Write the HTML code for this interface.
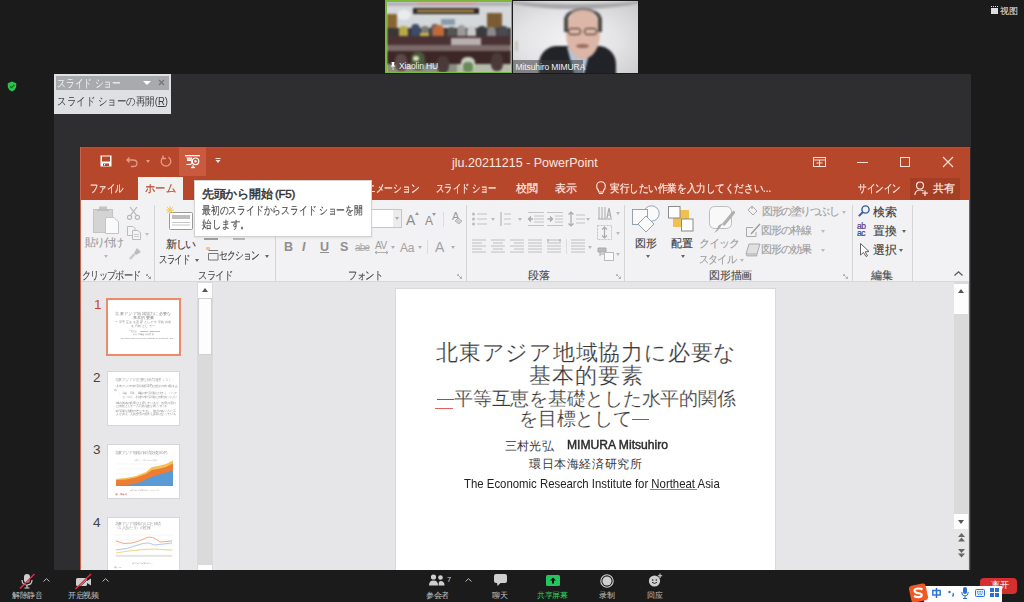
<!DOCTYPE html>
<html lang="ja"><head><meta charset="utf-8">
<style>
*{margin:0;padding:0;box-sizing:border-box}
html,body{width:1024px;height:602px;overflow:hidden;background:#1b1b1b;font-family:"Liberation Sans",sans-serif;position:relative}
.a{position:absolute}
.t{position:absolute;white-space:nowrap;line-height:1;transform-origin:0 50%}
svg{position:absolute;overflow:visible}
#share{left:54px;top:74px;width:917px;height:496px;background:#2e2e30}
#ppt{left:80px;top:147px;width:890px;height:423px;background:#b7472a;overflow:hidden}
#ribbon{left:0;top:53px;width:889px;height:82px;background:#f2f1f3;border-bottom:1px solid #d8d8da}
#left{left:0;top:135px;width:135px;height:288px;background:#e7e7e9}
#main{left:135px;top:135px;width:754px;height:288px;background:#e6e6e8}
#slide{left:316px;top:142px;width:379px;height:300px;background:#fff;box-shadow:0 0 0 1px #d9d9db}
#bar{left:0;top:570px;width:1024px;height:32px;background:#1b1b1b}
.tab{color:#fde9e3;font-size:11px;top:36px;-webkit-text-stroke:0.2px currentColor}
.rl{color:#3c3c3c;font-size:10.5px;letter-spacing:-1px;-webkit-text-stroke:0.12px currentColor}
.gl{color:#4a4a4a;font-size:10.5px;letter-spacing:-1px;top:123px;-webkit-text-stroke:0.12px currentColor}
.dis{color:#9c9c9c}
.sep{position:absolute;width:1px;background:#d5d5d5;top:5px;height:77px}
.dd{position:absolute;width:0;height:0;border-left:2.5px solid transparent;border-right:2.5px solid transparent;border-top:3px solid #666}
</style></head><body>
<!-- shield -->
<svg style="left:7px;top:81px" width="10" height="11" viewBox="0 0 10 11"><path d="M5 0.5 L9.3 2.2 L9.1 6.2 Q8.5 9 5 10.5 Q1.5 9 0.9 6.2 L0.7 2.2 Z" fill="#2bc24a"/><path d="M3 5.3 L4.5 6.8 L7.2 3.8" stroke="#145e22" stroke-width="1.1" fill="none"/></svg>
<!-- view button -->
<div class="a" style="left:991px;top:8px;width:7px;height:6px;background:#ddd"></div>
<div class="a" style="left:991px;top:6px;width:7px;height:1px;border-top:1px dotted #ddd"></div>
<div class="t" style="left:1000px;top:6.5px;font-size:8.5px;color:#e6e6e6;letter-spacing:-0.5px">视图</div>

<!-- video tile 1 -->
<div class="a" style="left:385px;top:0;width:127px;height:73px;background:#7db83c;overflow:hidden">
  <div class="a" style="left:1.5px;top:1.5px;width:124px;height:70px;background:#d4d8db;overflow:hidden">
   <div class="a" style="left:0;top:0;width:124px;height:70px;filter:blur(1px)">
    <div class="a" style="left:0;top:0;width:124px;height:4px;background:#b4b2b6"></div>
    <div class="a" style="left:30px;top:0;width:60px;height:3px;background:#c9a0a0"></div>
    <div class="a" style="left:26px;top:6px;width:66px;height:6px;background:#2e2626"></div>
    <div class="a" style="left:30px;top:8px;width:57px;height:2px;background:#c7a04a"></div>
    <div class="a" style="left:10px;top:8px;width:14px;height:10px;background:#e8ecef;border-radius:50%"></div>
    <div class="a" style="left:0px;top:12px;width:10px;height:20px;background:#87652f"></div>
    <div class="a" style="left:100px;top:11px;width:15px;height:17px;background:#7b5b34"></div>
    <div class="a" style="left:54px;top:17px;width:14px;height:6px;background:#8a9aaa"></div>
    <div class="a" style="left:0;top:26px;width:124px;height:17px;background:#3a3536"></div>
    <div class="a" style="left:12px;top:24px;width:9px;height:11px;background:#b8a84a;border-radius:40% 40% 10% 10%"></div>
    <div class="a" style="left:24px;top:22px;width:9px;height:12px;background:#3d4a6a;border-radius:40% 40% 10% 10%"></div>
    <div class="a" style="left:34px;top:24px;width:8px;height:10px;background:#7a7a72;border-radius:40% 40% 10% 10%"></div>
    <div class="a" style="left:44px;top:22px;width:8px;height:12px;background:#6a5a5a;border-radius:40% 40% 10% 10%"></div>
    <div class="a" style="left:33px;top:31px;width:9px;height:5px;background:#c8b84a"></div>
    <div class="a" style="left:46px;top:23px;width:11px;height:13px;background:#c06a3a;border-radius:40% 40% 10% 10%"></div>
    <div class="a" style="left:60px;top:25px;width:9px;height:12px;background:#555;border-radius:40% 40% 10% 10%"></div>
    <div class="a" style="left:70px;top:23px;width:9px;height:14px;background:#9a9a9a;border-radius:40% 40% 10% 10%"></div>
    <div class="a" style="left:80px;top:24px;width:9px;height:13px;background:#c8c8c8;border-radius:40% 40% 10% 10%"></div>
    <div class="a" style="left:90px;top:24px;width:10px;height:13px;background:#3a3a3e;border-radius:40% 40% 10% 10%"></div>
    <div class="a" style="left:100px;top:25px;width:9px;height:12px;background:#8a8a8a;border-radius:40% 40% 10% 10%"></div>
    <div class="a" style="left:110px;top:24px;width:12px;height:14px;background:#4a4a52;border-radius:40% 40% 10% 10%"></div>
    <div class="a" style="left:0;top:34px;width:124px;height:9px;background:#4a3234"></div>
    <div class="a" style="left:64px;top:36px;width:30px;height:7px;background:#b8b0b0"></div>
    <div class="a" style="left:0;top:43px;width:124px;height:6px;background:#7c6a6a"></div>
    <div class="a" style="left:0;top:49px;width:124px;height:14px;background:#3c2726"></div>
    <div class="a" style="left:0;top:62px;width:124px;height:9px;background:#8a8e7e"></div>
    <div class="a" style="left:70px;top:62px;width:54px;height:9px;background:#b6bcac"></div>
    <div class="a" style="left:8px;top:52px;width:12px;height:17px;background:#5a4a48;border-radius:40%"></div>
    <div class="a" style="left:24px;top:50px;width:14px;height:18px;background:#4a5a3a;border-radius:40%"></div>
    <div class="a" style="left:26px;top:54px;width:6px;height:5px;background:#d8e0c8;border-radius:40%"></div>
    <div class="a" style="left:50px;top:54px;width:12px;height:17px;background:#4a3a3a;border-radius:40%"></div>
    <div class="a" style="left:74px;top:55px;width:14px;height:14px;background:#c8d2c0;border-radius:40%"></div>
    <div class="a" style="left:76px;top:60px;width:10px;height:10px;background:#6a8a5a;border-radius:40%"></div>
    <div class="a" style="left:104px;top:51px;width:12px;height:18px;background:#4a3a3a;border-radius:40%"></div>
   </div>
  </div>
  <svg style="left:5px;top:62px" width="6" height="8" viewBox="0 0 6 8"><path d="M1.5 0 H4.5 L4 3 L5.5 4.5 H0.5 L2 3 Z M2.7 4.5 V8 H3.3 V4.5Z" fill="#fff"/></svg>
  <div class="t" style="left:14px;top:62px;font-size:8.5px;color:#f2f2f2;letter-spacing:-0.1px">Xiaolin HU</div>
</div>
<!-- video tile 2 -->
<div class="a" style="left:513px;top:1px;width:125px;height:72px;background:radial-gradient(ellipse at 45% 55%,#f2f2f4 0%,#e4e4e6 50%,#c8c8ca 100%);overflow:hidden">
 <div class="a" style="left:0;top:0;width:125px;height:72px;filter:blur(0.8px)">
  <div class="a" style="left:-10px;top:-14px;width:145px;height:22px;border-bottom:5px solid #a8a8aa;border-radius:0 0 50% 50%"></div>
  <div class="a" style="left:2px;top:40px;width:3px;height:10px;background:#c9c4b8"></div>
  <div class="a" style="left:26px;top:45px;width:77px;height:34px;background:#222328;border-radius:18px 18px 0 0"></div>
  <div class="a" style="left:54px;top:46px;width:24px;height:27px;background:#b4c4d8;clip-path:polygon(0 0,100% 0,70% 100%,30% 100%)"></div>
  <div class="a" style="left:53px;top:8px;width:34px;height:50px;background:#dcb6a6;border-radius:46% 46% 50% 50%"></div>
  <div class="a" style="left:51px;top:7px;width:38px;height:24px;border-top:2px solid #7a7472;border-left:4px solid #4e4a48;border-right:4px solid #4e4a48;border-radius:50% 50% 0 0"></div>
  <div class="a" style="left:55px;top:27px;width:13px;height:7px;border:1.2px solid #3a2a28;border-radius:3px"></div>
  <div class="a" style="left:71px;top:27px;width:13px;height:7px;border:1.2px solid #3a2a28;border-radius:3px"></div>
  <div class="a" style="left:63px;top:43px;width:13px;height:4px;background:#9a6a5e;border-radius:50%"></div>
 </div>
  <div class="a" style="left:0;top:59px;width:70px;height:13px;background:rgba(60,60,62,0.55)"></div>
  <div class="t" style="left:2.5px;top:62px;font-size:8.5px;color:#f2f2f2;letter-spacing:-0.1px">Mitsuhiro MIMURA</div>
</div>

<div id="share" class="a"></div>
<div class="a" style="left:80px;top:146px;width:890px;height:1px;background:#3c2422"></div>
<!-- floating slideshow toolbar -->
<div class="a" style="left:54px;top:74px;width:117px;height:40px;background:#dfe0e3">
  <div class="a" style="left:2px;top:2px;width:113px;height:14px;background:#a8aaad"></div>
  <div class="t" style="left:3px;top:4px;font-size:10.5px;color:#f4f4f4;transform:scaleX(0.8)">スライド ショー</div>
  <div class="dd" style="left:89px;top:7px;border-left-width:4px;border-right-width:4px;border-top:4px solid #fff"></div>
  <svg style="left:104px;top:5px" width="7" height="7" viewBox="0 0 7 7"><path d="M1 1 L6 6 M6 1 L1 6" stroke="#76767a" stroke-width="1.3"/></svg>
  <div class="t" style="left:3px;top:22px;font-size:11px;color:#3d3d3d;transform:scaleX(0.865)">スライド ショーの再開(<u>R</u>)</div>
</div>

<div id="ppt" class="a">
  <div class="a" style="left:0;top:0;width:890px;height:1px;background:#a9574a"></div>
  <!-- title bar -->
  <svg style="left:20px;top:8px" width="12" height="12" viewBox="0 0 12 12"><rect x="0.5" y="0.5" width="11" height="11" fill="#fff"/><rect x="2" y="1.5" width="8" height="5" fill="#b7472a"/><rect x="3" y="8.5" width="6" height="2.5" fill="#b7472a"/><rect x="4" y="9" width="1" height="1.5" fill="#fff"/></svg>
  <svg style="left:46px;top:9px" width="12" height="11" viewBox="0 0 12 11"><path d="M1 4 H7 Q11 4 11 7.5 Q11 10.5 7 10.5 H5 M3.5 1.5 L1 4 L3.5 6.5" stroke="#e39b86" stroke-width="1.3" fill="none"/></svg>
  <div class="dd" style="left:66px;top:13px;border-top-color:#e39b86"></div>
  <svg style="left:80px;top:8px" width="12" height="12" viewBox="0 0 12 12"><path d="M8.5 2.2 A4.8 4.8 0 1 1 3.5 2.2" stroke="#e39b86" stroke-width="1.3" fill="none"/><path d="M3 0.5 V3.5 H6" stroke="#e39b86" stroke-width="1.3" fill="none"/></svg>
  <div class="a" style="left:99px;top:0;width:27px;height:29px;background:#ca5a3d"></div>
  <svg style="left:105px;top:8px" width="15" height="14" viewBox="0 0 15 14"><rect x="0" y="0" width="15" height="1.3" fill="#fff"/><path d="M1.5 3 H6.5 V4.2 H2.7 V5.5 H5.5 Q7 5.5 7 7.3 Q7 9.5 4.5 9.5 H1.5" stroke="#fff" stroke-width="1.1" fill="none"/><circle cx="10.5" cy="6.3" r="3.3" stroke="#fff" stroke-width="1.2" fill="none"/><circle cx="10.5" cy="6.3" r="1.2" fill="#fff"/><path d="M6 12.5 H10" stroke="#fff" stroke-width="1.3"/><path d="M8 10 V12.5" stroke="#fff" stroke-width="1"/></svg>
  <svg style="left:135px;top:11px" width="6" height="6" viewBox="0 0 6 6"><rect x="0.5" y="0" width="5" height="1" fill="#fbe3dc"/><path d="M0.5 2 H5.5 L3 5 Z" fill="#fbe3dc"/></svg>
  <div class="t" style="left:372px;top:10px;font-size:12.5px;color:#fbe8e2">jlu.20211215 - PowerPoint</div>
  <svg style="left:733px;top:10px" width="13" height="10" viewBox="0 0 13 10"><rect x="0.5" y="0.5" width="12" height="9" stroke="#fbe3dc" fill="none"/><path d="M0.5 3 H12.5 M6.5 3 V9.5 M3.5 6 H9.5" stroke="#fbe3dc" fill="none"/></svg>
  <div class="a" style="left:777px;top:15px;width:11px;height:1px;background:#fbe3dc"></div>
  <div class="a" style="left:820px;top:10px;width:10px;height:10px;border:1px solid #fbe3dc"></div>
  <svg style="left:863px;top:10px" width="10" height="10" viewBox="0 0 10 10"><path d="M0 0 L10 10 M10 0 L0 10" stroke="#fbe3dc" stroke-width="1.1"/></svg>
  <!-- tabs -->
  <div class="t tab" style="left:10px;transform:scaleX(0.77)">ファイル</div>
  <div class="a" style="left:58px;top:30px;width:45px;height:24px;background:#f1f1f1"></div>
  <div class="t tab" style="left:65px;color:#b7472a;transform:scaleX(0.94)">ホーム</div>
  <div class="t tab" style="left:278px;transform:scaleX(0.8)">アニメーション</div>
  <div class="t tab" style="left:356px;transform:scaleX(0.76)">スライド ショー</div>
  <div class="t tab" style="left:436px">校閲</div>
  <div class="t tab" style="left:475px">表示</div>
  <svg style="left:516px;top:34px" width="10" height="14" viewBox="0 0 10 14"><path d="M2.5 9.5 Q0.5 7.5 0.7 5 A4.3 4.3 0 0 1 9.3 5 Q9.5 7.5 7.5 9.5 V11 H2.5 Z" stroke="#fbe3dc" stroke-width="1.1" fill="none"/><path d="M3 12.5 H7" stroke="#fbe3dc" stroke-width="1.1"/></svg>
  <div class="t tab" style="left:530px;transform:scaleX(0.87)">実行したい作業を入力してください...</div>
  <div class="t tab" style="left:778px;transform:scaleX(0.78)">サインイン</div>
  <div class="a" style="left:830px;top:31px;width:50px;height:22px;background:#a43f26"></div>
  <svg style="left:834px;top:34px" width="15" height="15" viewBox="0 0 15 15"><circle cx="6" cy="4.5" r="3.5" stroke="#fbe3dc" stroke-width="1.2" fill="none"/><path d="M0.8 14 Q1.5 9 6 9 Q8 9 9.5 10" stroke="#fbe3dc" stroke-width="1.2" fill="none"/><path d="M11 9.5 V15 M8.3 12.2 H13.8" stroke="#fbe3dc" stroke-width="1.2"/></svg>
  <div class="t tab" style="left:853px;letter-spacing:-0.5px">共有</div>

  <div id="ribbon" class="a">
  <!-- clipboard -->
  <svg style="left:13px;top:6px" width="26" height="28" viewBox="0 0 26 28"><rect x="0.5" y="3.5" width="19" height="23" fill="#d4d4d4" stroke="#c4c4c4"/><rect x="6" y="0.5" width="8" height="4" fill="#c4c4c4"/><rect x="4" y="3" width="12" height="2" fill="#bdbdbd"/><path d="M12.5 11.5 H21 L25.5 16 V27.5 H12.5 Z" fill="#fafafa" stroke="#c4c4c4"/></svg>
  <div class="t rl dis" style="left:5px;top:37px;font-size:11px;letter-spacing:-1.6px">貼り付け</div>
  <div class="dd" style="left:24px;top:55px;border-top-color:#b8b8b8"></div>
  <svg style="left:47px;top:7px" width="13" height="13" viewBox="0 0 13 13"><path d="M3 0 L10 9 M10 0 L3 9" stroke="#b5b5b5" stroke-width="1.2"/><circle cx="2.6" cy="10.3" r="2.1" stroke="#b5b5b5" stroke-width="1.1" fill="none"/><circle cx="10.4" cy="10.3" r="2.1" stroke="#b5b5b5" stroke-width="1.1" fill="none"/></svg>
  <svg style="left:47px;top:26px" width="14" height="14" viewBox="0 0 14 14"><path d="M0.5 0.5 H6 L8 2.5 V9.5 H0.5 Z" fill="#f4f4f4" stroke="#bbb"/><path d="M5.5 4.5 H11 L13.5 7 V13.5 H5.5 Z" fill="#f4f4f4" stroke="#bbb"/><path d="M7 8.5 H12 M7 10.5 H12" stroke="#ccc"/></svg>
  <div class="dd" style="left:65px;top:33px;border-top-color:#c0c0c0"></div>
  <svg style="left:49px;top:47px" width="13" height="13" viewBox="0 0 13 13"><path d="M8 1 L12 5 L7 8 L5 6 Z" fill="#bdbdbd"/><path d="M5.5 7 L1 12" stroke="#c8c8c8" stroke-width="2.5"/></svg>
  <div class="t gl" style="left:2px;top:70px;font-size:11px;transform:scaleX(0.83)">クリップボード</div>
  <svg style="left:66px;top:74px" width="5" height="5" viewBox="0 0 5 5"><path d="M0.5 0.5 H2 M0.5 0.5 V2 M1 1 L4.5 4.5 M2.5 4.5 H4.5 V2.5" stroke="#888" stroke-width="0.8" fill="none"/></svg>
  <div class="sep" style="left:74px"></div>
  <!-- slides -->
  <svg style="left:86px;top:5px" width="28" height="26" viewBox="0 0 28 26"><rect x="3.5" y="7.5" width="23" height="17" rx="1" fill="#fdfdfd" stroke="#9a9a9a"/><rect x="6" y="10" width="18" height="4" fill="#bdbdbd"/><path d="M6 17.5 H24 M6 20 H24" stroke="#c8c8c8"/><path d="M4 1 V9 M0 5 H8 M1.2 2.2 L6.8 7.8 M6.8 2.2 L1.2 7.8" stroke="#f2c74a" stroke-width="1"/></svg>
  <div class="t rl" style="left:86px;top:39px;font-size:11px;letter-spacing:-1.4px">新しい</div>
  <div class="a" style="left:124px;top:38px;width:14px;height:1.5px;background:#a0a0a0"></div>
  <div class="a" style="left:153px;top:38px;width:12px;height:1.5px;background:#b8b8b8"></div>
  <div class="t rl" style="left:79px;top:54px;font-size:11px;transform:scaleX(0.77)">スライド</div>
  <div class="dd" style="left:115px;top:59px"></div>
  <svg style="left:126px;top:47px" width="13" height="14" viewBox="0 0 13 14"><rect x="0" y="0" width="4" height="3" fill="#f4c48a"/><path d="M2.5 3.5 H12 M2.5 6.5 H12 V13 H2.5 Z" stroke="#777" fill="none"/></svg>
  <div class="t rl" style="left:139px;top:50px;font-size:11px;transform:scaleX(0.8)">セクション</div>
  <div class="dd" style="left:185px;top:55px"></div>
  <div class="t gl" style="left:118px;top:70px;font-size:11px;transform:scaleX(0.85)">スライド</div>
  <div class="sep" style="left:195px"></div>
  <!-- font -->
  <div class="a" style="left:280px;top:9px;width:42px;height:19px;background:#fff;border:1px solid #c6c6c6"></div>
  <div class="a" style="left:313px;top:10px;width:8px;height:17px;background:#ececec"></div>
  <div class="dd" style="left:315px;top:17px;border-top-color:#aaa"></div>
  <div class="t" style="left:326px;top:13px;font-size:14px;color:#8c8c8c">A</div>
  <svg style="left:335px;top:12px" width="4" height="3" viewBox="0 0 4 3"><path d="M0 3 L2 0 L4 3Z" fill="#999"/></svg>
  <div class="t" style="left:345px;top:15px;font-size:12px;color:#8c8c8c">A</div>
  <svg style="left:352px;top:13px" width="4" height="3" viewBox="0 0 4 3"><path d="M0 0 L2 3 L4 0Z" fill="#999"/></svg>
  <div class="a" style="left:363px;top:12px;width:1px;height:15px;background:#dcdcdc"></div>
  <div class="t" style="left:372px;top:11px;font-size:11px;color:#9a9a9a">A</div>
  <svg style="left:374px;top:17px" width="9" height="8" viewBox="0 0 9 8"><path d="M4 1 L8 4 L5 7 L1 4 Z" fill="#d0d0d0" stroke="#aaa" stroke-width="0.8"/></svg>
  <div class="t" style="left:204px;top:41px;font-size:12.5px;font-weight:bold;color:#8f8f8f">B</div>
  <div class="t" style="left:222px;top:41px;font-size:12.5px;font-style:italic;color:#8f8f8f;font-weight:bold">I</div>
  <div class="t" style="left:240px;top:41px;font-size:12.5px;color:#8f8f8f;text-decoration:underline;font-weight:bold">U</div>
  <div class="t" style="left:260px;top:41px;font-size:12.5px;color:#8f8f8f;font-weight:bold">S</div>
  <div class="t" style="left:275px;top:43px;font-size:10px;color:#a8a8a8;text-decoration:line-through;letter-spacing:-0.8px">abe</div>
  <div class="t" style="left:295px;top:41px;font-size:10px;color:#9e9e9e;letter-spacing:-0.5px">AV</div>
  <svg style="left:295px;top:51px" width="13" height="3" viewBox="0 0 13 3"><path d="M0 1.5 H13 M0 1.5 L2 0 M0 1.5 L2 3 M13 1.5 L11 0 M13 1.5 L11 3" stroke="#9e9e9e" stroke-width="0.8"/></svg>
  <div class="dd" style="left:311px;top:46px;border-top-color:#b0b0b0"></div>
  <div class="t" style="left:320px;top:42px;font-size:12px;color:#a2a2a2;letter-spacing:-0.3px">Aa</div>
  <div class="dd" style="left:338px;top:46px;border-top-color:#b0b0b0"></div>
  <div class="a" style="left:347px;top:40px;width:1px;height:14px;background:#dcdcdc"></div>
  <div class="t" style="left:355px;top:40px;font-size:14px;color:#a2a2a2">A</div>
  <div class="dd" style="left:371px;top:46px;border-top-color:#b0b0b0"></div>
  <div class="t gl" style="left:268px;top:70px;font-size:11px;transform:scaleX(0.86)">フォント</div>
  <svg style="left:377px;top:74px" width="5" height="5" viewBox="0 0 5 5"><path d="M0.5 0.5 H2 M0.5 0.5 V2 M1 1 L4.5 4.5 M2.5 4.5 H4.5 V2.5" stroke="#aaa" stroke-width="0.8" fill="none"/></svg>
  <div class="sep" style="left:386px"></div>
  <!-- paragraph -->
  <svg style="left:392px;top:12px" width="16" height="14" viewBox="0 0 16 14"><circle cx="1.5" cy="2" r="1.5" fill="#bbb"/><circle cx="1.5" cy="7" r="1.5" fill="#bbb"/><circle cx="1.5" cy="12" r="1.5" fill="#bbb"/><path d="M5 2 H15 M5 7 H15 M5 12 H15" stroke="#c4c4c4"/></svg>
  <div class="dd" style="left:411px;top:18px;border-top-color:#bbb"></div>
  <svg style="left:420px;top:12px" width="11" height="14" viewBox="0 0 11 14"><path d="M1 0 V14" stroke="#bbb" stroke-width="1.3"/><path d="M4 2 H11 M4 7 H11 M4 12 H11" stroke="#c4c4c4"/></svg>
  <div class="dd" style="left:438px;top:18px;border-top-color:#bbb"></div>
  <svg style="left:448px;top:12px" width="16" height="14" viewBox="0 0 16 14"><path d="M0 0.5 H16 M6 4 H16 M6 7 H16 M6 10 H16 M0 13.5 H16" stroke="#c4c4c4"/><path d="M5 7 H1 M3 4.5 L0.5 7 L3 9.5" stroke="#aaa" stroke-width="1.3" fill="none"/></svg>
  <svg style="left:467px;top:12px" width="16" height="14" viewBox="0 0 16 14"><path d="M0 0.5 H16 M8 4 H16 M8 7 H16 M8 10 H16 M0 13.5 H16" stroke="#c4c4c4"/><path d="M0.5 7 H5 M3 4.5 L5.5 7 L3 9.5" stroke="#aaa" stroke-width="1.3" fill="none"/></svg>
  <svg style="left:488px;top:11px" width="17" height="16" viewBox="0 0 17 16"><path d="M3 1 V15 M0.5 3.5 L3 1 L5.5 3.5 M0.5 12.5 L3 15 L5.5 12.5" stroke="#aaa" stroke-width="1.2" fill="none"/><path d="M8 4 H17 M8 8 H17 M8 12 H17" stroke="#c4c4c4"/></svg>
  <div class="dd" style="left:506px;top:18px;border-top-color:#bbb"></div>
  <svg style="left:518px;top:5px" width="14" height="15" viewBox="0 0 14 15"><path d="M1 2 V14 M4 2 V14 M7 2 V14" stroke="#aaa" stroke-width="1"/><path d="M9 13 L11 3 L13 13 M9.7 10 H12.3" stroke="#aaa" stroke-width="1.2" fill="none"/><path d="M0 14 H14" stroke="#aaa"/></svg>
  <div class="dd" style="left:536px;top:12px;border-top-color:#bbb"></div>
  <svg style="left:517px;top:25px" width="15" height="15" viewBox="0 0 15 15"><rect x="0.5" y="0.5" width="14" height="14" fill="none" stroke="#c4c4c4" stroke-dasharray="2 1"/><path d="M7.5 2 V13 M5 4.5 L7.5 2 L10 4.5 M5 10.5 L7.5 13 L10 10.5" stroke="#aaa" stroke-width="1.2" fill="none"/></svg>
  <div class="dd" style="left:536px;top:32px;border-top-color:#bbb"></div>
  <svg style="left:518px;top:47px" width="16" height="14" viewBox="0 0 16 14"><path d="M0 1 H8 V5 H0 Z M2 5 V9 M2 7 H6" fill="#bbb" stroke="#aaa"/><rect x="6.5" y="5.5" width="9" height="8" fill="#fafafa" stroke="#bbb"/></svg>
  <div class="dd" style="left:536px;top:53px;border-top-color:#bbb"></div>
  <svg style="left:392px;top:39px" width="90" height="14" viewBox="0 0 90 14">
    <path d="M0 1 H14 M0 4 H10 M0 7 H14 M0 10 H10 M0 13 H14" stroke="#c0c0c0"/>
    <path d="M19 1 H33 M21 4 H31 M19 7 H33 M21 10 H31 M19 13 H33" stroke="#c0c0c0"/>
    <path d="M38 1 H52 M42 4 H52 M38 7 H52 M42 10 H52 M38 13 H52" stroke="#c0c0c0"/>
    <path d="M56 1 H70 M56 4 H70 M56 7 H70 M56 10 H70 M56 13 H70" stroke="#c0c0c0"/>
    <path d="M75 1 H89 M75 4 H89 M75 7 H89 M75 10 H89 M75 13 H89" stroke="#c0c0c0"/><path d="M76 0 V3 M88 0 V3" stroke="#aaa"/>
  </svg>
  <div class="a" style="left:486px;top:39px;width:1px;height:15px;background:#dcdcdc"></div>
  <svg style="left:491px;top:39px" width="14" height="14" viewBox="0 0 14 14"><path d="M0 1 H14 M0 4 H14 M0 7 H14 M0 10 H14 M0 13 H14" stroke="#c0c0c0"/></svg>
  <div class="dd" style="left:508px;top:46px;border-top-color:#bbb"></div>
  <div class="t gl" style="left:448px;top:70px;font-size:11px;letter-spacing:-0.3px">段落</div>
  <svg style="left:536px;top:74px" width="5" height="5" viewBox="0 0 5 5"><path d="M0.5 0.5 H2 M0.5 0.5 V2 M1 1 L4.5 4.5 M2.5 4.5 H4.5 V2.5" stroke="#aaa" stroke-width="0.8" fill="none"/></svg>
  <div class="sep" style="left:544px"></div>
  <!-- drawing -->
  <svg style="left:552px;top:5px" width="29" height="28" viewBox="0 0 29 28"><circle cx="19.5" cy="8.5" r="7.7" fill="#fafafa" stroke="#8a9aaa" stroke-width="0.9"/><rect x="0.5" y="4.5" width="15" height="15" fill="#fafafa" stroke="#8a9aaa" stroke-width="0.9"/><path d="M14 11 L22 19 L14 27 L6 19 Z" fill="#fafafa" stroke="#8a9aaa" stroke-width="0.9"/></svg>
  <div class="t rl" style="left:555px;top:38px;font-size:11px;letter-spacing:-0.5px">図形</div>
  <div class="dd" style="left:566px;top:55px"></div>
  <svg style="left:588px;top:6px" width="26" height="26" viewBox="0 0 26 26"><rect x="12" y="4" width="9" height="9" fill="#f0c050"/><rect x="5" y="12" width="9" height="9" fill="#f0c050"/><rect x="0.5" y="0.5" width="11.5" height="11.5" fill="#fdfdfd" stroke="#8a8a8a"/><rect x="13.5" y="13" width="11.5" height="12" fill="#fdfdfd" stroke="#8a8a8a"/></svg>
  <div class="t rl" style="left:591px;top:38px;font-size:11px;letter-spacing:-0.5px">配置</div>
  <div class="dd" style="left:601px;top:55px"></div>
  <svg style="left:629px;top:6px" width="26" height="28" viewBox="0 0 26 28"><rect x="0.5" y="0.5" width="22" height="22" rx="5" fill="#f8f8f8" stroke="#bdbdbd"/><path d="M24.5 6.5 L15 18" stroke="#b0b0b0" stroke-width="3.2" stroke-linecap="round"/><path d="M14 17 L11.5 21 Q9 25 5 27 Q8 24 9.5 19.5 Z" fill="#a8a8a8"/></svg>
  <div class="t rl dis" style="left:619px;top:38px;font-size:11px">クイック</div>
  <div class="t rl dis" style="left:619px;top:54px;font-size:11px;transform:scaleX(0.92)">スタイル</div>
  <div class="dd" style="left:660px;top:59px;border-top-color:#bbb"></div>
  <svg style="left:667px;top:5px" width="14" height="13" viewBox="0 0 14 13"><path d="M5 1 L10 6 L6 10 L1 5 Z" fill="none" stroke="#aaa"/><path d="M5 1 V4" stroke="#aaa"/></svg>
  <div class="t rl dis" style="left:682px;top:6px;font-size:11px;letter-spacing:-1.5px">図形の塗りつぶし</div>
  <div class="dd" style="left:762px;top:11px;border-top-color:#bbb"></div>
  <svg style="left:666px;top:24px" width="15" height="13" viewBox="0 0 15 13"><path d="M0.5 3.5 H7 M0.5 3.5 V12.5 H10 V8" stroke="#aaa" fill="none"/><path d="M14 0 L5 10" stroke="#999" stroke-width="1.3"/></svg>
  <div class="t rl dis" style="left:681px;top:25px;font-size:11px">図形の枠線</div>
  <div class="dd" style="left:741px;top:30px;border-top-color:#bbb"></div>
  <svg style="left:665px;top:43px" width="16" height="14" viewBox="0 0 16 14"><path d="M4 1 H15 L12 11 H1 Z" fill="#e0e0e0" stroke="#aaa"/><path d="M1 11 L2 13 H12 L12 11" fill="#c8c8c8" stroke="#aaa" stroke-width="0.8"/></svg>
  <div class="t rl dis" style="left:681px;top:44px;font-size:11px">図形の効果</div>
  <div class="dd" style="left:741px;top:49px;border-top-color:#bbb"></div>
  <div class="t gl" style="left:629px;top:70px;font-size:11px;letter-spacing:-0.2px">図形描画</div>
  <svg style="left:763px;top:74px" width="5" height="5" viewBox="0 0 5 5"><path d="M0.5 0.5 H2 M0.5 0.5 V2 M1 1 L4.5 4.5 M2.5 4.5 H4.5 V2.5" stroke="#aaa" stroke-width="0.8" fill="none"/></svg>
  <div class="sep" style="left:772px"></div>
  <!-- editing -->
  <svg style="left:778px;top:5px" width="12" height="12" viewBox="0 0 12 12"><circle cx="7.5" cy="4.5" r="3.6" stroke="#2f5e9e" stroke-width="1.4" fill="none"/><path d="M5 7 L0.8 11.2" stroke="#2f5e9e" stroke-width="1.8"/></svg>
  <div class="t rl" style="left:793px;top:7px;font-size:11.8px;letter-spacing:-0.3px">検索</div>
  <div class="t" style="left:777px;top:23px;font-size:8.5px;color:#5a3a8a;letter-spacing:-0.4px;line-height:7px;-webkit-text-stroke:0.2px currentColor">ab<br><span style="color:#2a4a8a">ac</span></div>
  <div class="t rl" style="left:793px;top:26px;font-size:11.8px;letter-spacing:-0.3px">置換</div>
  <div class="dd" style="left:822px;top:30px"></div>
  <svg style="left:780px;top:43px" width="10" height="14" viewBox="0 0 10 14"><path d="M0.5 0.5 V12 L3.5 9.5 L6 13.5 L7.5 12.8 L5.2 8.8 L9 8.5 Z" fill="#fff" stroke="#555" stroke-width="0.9"/></svg>
  <div class="t rl" style="left:793px;top:45px;font-size:11.8px;letter-spacing:-0.3px">選択</div>
  <div class="dd" style="left:819px;top:49px"></div>
  <div class="t gl" style="left:791px;top:70px;font-size:11px;letter-spacing:-0.3px">編集</div>
  <div class="sep" style="left:832px"></div>
  <svg style="left:874px;top:71px" width="9" height="5" viewBox="0 0 9 5"><path d="M0.5 4.5 L4.5 0.8 L8.5 4.5" stroke="#555" stroke-width="1.2" fill="none"/></svg>
</div>
  <div id="left" class="a">
  <div class="t" style="left:14px;top:16px;font-size:13.5px;color:#c8472a">1</div>
  <div class="a" style="left:26px;top:16px;width:75px;height:58px;border:2px solid #ec8a6a;background:#fff;overflow:hidden">
    <div class="a" style="left:0;top:0;width:379px;height:288px;transform:scale(0.1865);transform-origin:0 0;color:#8a8a8a">
      <div class="t" style="left:40px;top:62px;font-size:22px;letter-spacing:0.8px">北東アジア地域協力に必要な</div>
      <div class="t" style="left:133px;top:86px;font-size:22px;letter-spacing:1px">基本的要素</div>
      <div class="t" style="left:40px;top:110px;font-size:18.5px;letter-spacing:-0.2px">ー平等互恵を基礎とした水平的関係</div>
      <div class="t" style="left:124px;top:130px;font-size:18.5px">を目標としてー</div>
      <div class="t" style="left:110px;top:160px;font-size:12px">三村光弘　 <b>MIMURA Mitsuhiro</b></div>
      <div class="t" style="left:133px;top:178px;font-size:12px;letter-spacing:0.6px">環日本海経済研究所</div>
      <div class="t" style="left:68px;top:197px;font-size:12.5px">The Economic Research Institute for Northeat Asia</div>
    </div>
  </div>
  <div class="t" style="left:13px;top:89px;font-size:13.5px;color:#444">2</div>
  <div class="a" style="left:28px;top:90px;width:71px;height:53px;background:#fff;box-shadow:0 0 0 1px #d6d6d8;overflow:hidden">
    <div class="a" style="left:0;top:0;width:379px;height:288px;transform:scale(0.1873);transform-origin:0 0;color:#888">
      <div class="t" style="left:36px;top:30px;font-size:19px;color:#aaa">北東アジアの主要な経済指標（１）</div>
      <div class="t" style="left:30px;top:68px;font-size:15px;color:#8a8a8a">・北東アジアの経済規模(GDP)は世界の約２割を占</div>
      <div class="t" style="left:30px;top:88px;font-size:15px;color:#8a8a8a">め</div>
      <div class="t" style="left:56px;top:108px;font-size:14px;color:#999">－ 中国、日本、韓国の経済規模は大きく、ロシア</div>
      <div class="t" style="left:56px;top:126px;font-size:14px;color:#999">　 モンゴル、北朝鮮の経済規模は相対的に小さい</div>
      <div class="t" style="left:30px;top:156px;font-size:15px;color:#8a8a8a">・域内貿易の比率は上昇しているが、投資の流れ</div>
      <div class="t" style="left:30px;top:176px;font-size:15px;color:#8a8a8a">　は依然として一方向的な面が残っている</div>
      <div class="t" style="left:30px;top:198px;font-size:15px;color:#8a8a8a">・経済発展段階の差が大きく、協力のあり方に工</div>
      <div class="t" style="left:30px;top:218px;font-size:15px;color:#8a8a8a">　夫が必要、人的交流の拡大も課題となっている</div>
    </div>
  </div>
  <div class="t" style="left:13px;top:161px;font-size:13.5px;color:#444">3</div>
  <div class="a" style="left:28px;top:163px;width:71px;height:53px;background:#fff;box-shadow:0 0 0 1px #d6d6d8;overflow:hidden">
    <div class="a" style="left:0;top:0;width:379px;height:288px;transform:scale(0.1873);transform-origin:0 0"><div class="t" style="left:36px;top:30px;font-size:19px;color:#999">北東アジア地域の経済規模(GDP)</div><div class="t" style="left:140px;top:76px;font-size:9px;color:#bbb">北東アジア各国のGDPの推移</div><div class="t" style="left:120px;top:238px;font-size:9px;color:#bbb">■中国 ■日本 ■韓国 ■ロシア ■モンゴル</div><div class="t" style="left:36px;top:258px;font-size:9px;color:#c44">出所：世界銀行</div></div>
    <svg style="left:8px;top:15px" width="57" height="28" viewBox="0 0 57 28"><path d="M0 4 H57 M0 9 H57 M0 14 H57 M0 19 H57" stroke="#eee" stroke-width="0.6"/><path d="M0 19 L10 18 L20 16 L30 12 L36 7 L42 6 L50 4 L57 0.5 V26 H0 Z" fill="#f5c056"/><path d="M0 20 L10 19.5 L20 17.5 L30 14 L36 10 L42 9 L50 7 L57 3.5 V26 H0 Z" fill="#ec7d32"/><path d="M0 26 L15 24.5 L25 22 L35 17 L45 14 L57 10.5 V26 H0 Z" fill="#5b9bd5"/></svg>
    
  </div>
  <div class="t" style="left:13px;top:234px;font-size:13.5px;color:#444">4</div>
  <div class="a" style="left:28px;top:236px;width:71px;height:53px;background:#fff;box-shadow:0 0 0 1px #d6d6d8;overflow:hidden">
    <div class="a" style="left:0;top:0;width:379px;height:288px;transform:scale(0.1873);transform-origin:0 0"><div class="t" style="left:36px;top:20px;font-size:19px;color:#999">北東アジア地域の人口と経済</div><div class="t" style="left:36px;top:44px;font-size:19px;color:#999">（１人当たり）の推移</div><div class="t" style="left:130px;top:240px;font-size:9px;color:#bbb">■中国 ■日本 ■韓国 ■ロシア</div><div class="t" style="left:30px;top:262px;font-size:9px;color:#999">出所：IMF</div></div>
    <svg style="left:6px;top:14px" width="60" height="26" viewBox="0 0 60 26"><path d="M0 3 H60 M0 8 H60 M0 13 H60 M0 18 H60 M0 23 H60" stroke="#eee" stroke-width="0.6"/><path d="M2 9 Q10 13 18 11 T32 6 T46 10 L58 9" stroke="#f0a070" stroke-width="0.9" fill="none"/><path d="M2 18 Q14 17 24 13 T40 13 L58 11" stroke="#a8c4e4" stroke-width="0.9" fill="none"/><path d="M2 21 Q14 19 24 18 T40 17 L58 18" stroke="#f2d070" stroke-width="0.9" fill="none"/><path d="M2 24 H58" stroke="#c8c8c8" stroke-width="0.9"/></svg>
  </div>
  <!-- thumbnail scrollbar -->
  <div class="a" style="left:117px;top:0;width:16px;height:288px;background:#dadada"></div>
  <div class="a" style="left:118px;top:1px;width:14px;height:15px;background:#fdfdfd"></div>
  <svg style="left:122px;top:6px" width="6" height="4" viewBox="0 0 6 4"><path d="M0 4 L3 0 L6 4Z" fill="#555"/></svg>
  <div class="a" style="left:118px;top:16px;width:14px;height:57px;background:#fdfdfd;border:1px solid #d0d0d0"></div>
  <div class="a" style="left:118px;top:283px;width:14px;height:6px;background:#fdfdfd"></div>
</div>
  <div id="main" class="a">
  <div class="a" style="left:739px;top:0;width:15px;height:288px;background:#dadada"></div>
  <div class="a" style="left:739px;top:2px;width:14px;height:15px;background:#fdfdfd"></div>
  <svg style="left:743px;top:7px" width="6" height="4" viewBox="0 0 6 4"><path d="M0 4 L3 0 L6 4Z" fill="#555"/></svg>
  <div class="a" style="left:739px;top:17px;width:14px;height:15px;background:#fdfdfd"></div>
  <div class="a" style="left:739px;top:232px;width:14px;height:15px;background:#fdfdfd"></div>
  <svg style="left:743px;top:238px" width="6" height="4" viewBox="0 0 6 4"><path d="M0 0 L3 4 L6 0Z" fill="#555"/></svg>
  <div class="a" style="left:739px;top:247px;width:14px;height:41px;background:#e6e6e6"></div>
  <svg style="left:743px;top:251px" width="7" height="9" viewBox="0 0 7 9"><path d="M0 4 L3.5 0 L7 4Z M0 8.5 L3.5 4.5 L7 8.5Z" fill="#666"/></svg>
  <svg style="left:743px;top:267px" width="7" height="9" viewBox="0 0 7 9"><path d="M0 0 L3.5 4 L7 0Z M0 4.5 L3.5 8.5 L7 4.5Z" fill="#666"/></svg>
</div>
  <div id="slide" class="a">
  <div class="t" style="left:40px;top:54px;font-size:21.5px;color:#383838;letter-spacing:0.78px;-webkit-text-stroke:0.22px #fff">北東アジア地域協力に必要な</div>
  <div class="t" style="left:133px;top:77px;font-size:21.5px;color:#383838;letter-spacing:1.1px;-webkit-text-stroke:0.22px #fff">基本的要素</div>
  <div class="a" style="left:41px;top:110px;width:17px;height:1px;background:#666"></div><div class="t" style="left:58px;top:101px;font-size:18.5px;color:#383838;letter-spacing:-0.25px;-webkit-text-stroke:0.2px #fff">平等互恵を基礎とした水平的関係</div>
  <div class="a" style="left:39px;top:119px;width:18px;height:1px;background:#e06060"></div>
  <div class="t" style="left:123px;top:121px;font-size:18.5px;color:#383838;letter-spacing:-0.2px;-webkit-text-stroke:0.2px #fff">を目標として</div><div class="a" style="left:236px;top:130px;width:17px;height:1px;background:#666"></div>
  <div class="t" style="left:109px;top:151px;font-size:12.2px;color:#3a3a3a;letter-spacing:0.2px">三村光弘</div>
  <div class="t" style="left:171px;top:150px;font-size:12.5px;color:#2a2a2a;-webkit-text-stroke:0.45px currentColor;transform:scaleX(0.97)">MIMURA Mitsuhiro</div>
  <div class="t" style="left:133px;top:169px;font-size:12.2px;color:#3a3a3a;letter-spacing:0.6px">環日本海経済研究所</div>
  <div class="t" style="left:68px;top:188px;font-size:13px;color:#222;transform:scaleX(0.876)">The Economic Research Institute for Northeat Asia</div>
  <div class="a" style="left:254px;top:200px;width:47px;height:1px;background:#e06060"></div>
</div>
<div class="a" style="left:0;top:0;width:1px;height:423px;background:#c8654c"></div>
  <div class="a" style="left:114px;top:33px;width:178px;height:57px;background:#fff;border:1px solid #d2d2d2;box-shadow:0 1px 2px rgba(0,0,0,0.08)">
    <div class="t" style="left:7px;top:8px;font-size:11.5px;color:#333;-webkit-text-stroke:0.45px currentColor;letter-spacing:-0.3px">先頭から開始 (F5)</div>
    <div class="t" style="left:7px;top:24px;font-size:11px;color:#4a4a4a;-webkit-text-stroke:0.15px currentColor;transform:scaleX(0.8)">最初のスライドからスライド ショーを開</div>
    <div class="t" style="left:7px;top:38px;font-size:11px;color:#4a4a4a;-webkit-text-stroke:0.15px currentColor;transform:scaleX(0.87)">始します。</div>
  </div>
</div>
<div id="bar" class="a">
  <svg style="left:19px;top:3px" width="16" height="16" viewBox="0 0 16 16"><rect x="5" y="1" width="6" height="9" rx="3" fill="#cfcfcf"/><path d="M3 7 Q3 12 8 12 Q13 12 13 7" stroke="#cfcfcf" stroke-width="1.2" fill="none"/><path d="M8 12 V15 M5.5 15 H10.5" stroke="#cfcfcf" stroke-width="1.2"/><path d="M1 15.5 L15.5 1" stroke="#e0324a" stroke-width="1.5"/><path d="M2 16.5 L16.5 2" stroke="#1b1b1b" stroke-width="0.8"/></svg>
  <svg style="left:43px;top:8px" width="7" height="4" viewBox="0 0 7 4"><path d="M0.5 3.5 L3.5 0.7 L6.5 3.5" stroke="#bbb" stroke-width="1" fill="none"/></svg>
  <div class="t" style="left:12px;top:21.5px;font-size:8px;color:#c4c4c4;letter-spacing:-0.3px">解除静音</div>
  <svg style="left:74px;top:3px" width="19" height="16" viewBox="0 0 19 16"><rect x="2" y="5" width="11" height="8" rx="1.5" fill="#cfcfcf"/><path d="M13 8 L17 5.5 V12.5 L13 10 Z" fill="#cfcfcf"/><path d="M1.5 16 L17 1" stroke="#e0324a" stroke-width="1.5"/><path d="M2.5 17 L18 2" stroke="#1b1b1b" stroke-width="0.8"/></svg>
  <svg style="left:102px;top:8px" width="7" height="4" viewBox="0 0 7 4"><path d="M0.5 3.5 L3.5 0.7 L6.5 3.5" stroke="#bbb" stroke-width="1" fill="none"/></svg>
  <div class="t" style="left:68px;top:21.5px;font-size:8px;color:#c4c4c4;letter-spacing:-0.3px">开启视频</div>
  <svg style="left:429px;top:4px" width="16" height="12" viewBox="0 0 16 12"><circle cx="4.5" cy="3" r="2.6" fill="#cfcfcf"/><circle cx="11.5" cy="3.5" r="2.3" fill="#cfcfcf"/><path d="M0 11.5 Q0 6.5 4.5 6.5 Q9 6.5 9 11.5Z" fill="#cfcfcf"/><path d="M9.5 11.5 Q9.5 7 11.5 7 Q15.5 7 15.5 11.5Z" fill="#cfcfcf"/></svg>
  <div class="t" style="left:447px;top:6px;font-size:7.5px;color:#cfcfcf">7</div>
  <svg style="left:465px;top:8px" width="7" height="4" viewBox="0 0 7 4"><path d="M0.5 3.5 L3.5 0.7 L6.5 3.5" stroke="#bbb" stroke-width="1" fill="none"/></svg>
  <div class="t" style="left:426px;top:21.5px;font-size:8px;color:#c4c4c4;letter-spacing:-0.3px">参会者</div>
  <svg style="left:494px;top:4px" width="13" height="12" viewBox="0 0 13 12"><rect x="0" y="0" width="13" height="9" rx="2" fill="#cfcfcf"/><path d="M3 8.5 L3.5 12 L7 8.5Z" fill="#cfcfcf"/></svg>
  <div class="t" style="left:492px;top:21.5px;font-size:8px;color:#c4c4c4;letter-spacing:-0.3px">聊天</div>
  <div class="a" style="left:546px;top:5px;width:14px;height:11px;background:#22c55e;border-radius:1.5px"></div>
  <svg style="left:549px;top:7px" width="8" height="7" viewBox="0 0 8 7"><path d="M4 0.5 L7 3.5 H5 V6.5 H3 V3.5 H1 Z" fill="#111"/></svg>
  <div class="t" style="left:537px;top:21.5px;font-size:8px;color:#2fd15f;letter-spacing:-0.3px">共享屏幕</div>
  <svg style="left:600px;top:4px" width="14" height="14" viewBox="0 0 14 14"><circle cx="7" cy="7" r="6.2" stroke="#cfcfcf" stroke-width="1.1" fill="none"/><circle cx="7" cy="7" r="4.6" fill="#cfcfcf"/></svg>
  <div class="t" style="left:599px;top:21.5px;font-size:8px;color:#c4c4c4;letter-spacing:-0.3px">录制</div>
  <svg style="left:648px;top:3px" width="15" height="15" viewBox="0 0 15 15"><circle cx="6.5" cy="8" r="5.6" fill="#cfcfcf"/><circle cx="4.7" cy="7" r="0.8" fill="#1b1b1b"/><circle cx="8.3" cy="7" r="0.8" fill="#1b1b1b"/><path d="M4 9.3 Q6.5 11.5 9 9.3" stroke="#1b1b1b" stroke-width="0.9" fill="none"/><path d="M12 0.5 V5 M9.8 2.8 H14.2" stroke="#cfcfcf" stroke-width="1.1"/></svg>
  <div class="t" style="left:647px;top:21.5px;font-size:8px;color:#c4c4c4;letter-spacing:-0.3px">回应</div>
  <div class="a" style="left:980px;top:8px;width:37px;height:16px;background:#d3302f;border-radius:4px"></div>
  <div class="t" style="left:991px;top:11px;font-size:8.5px;color:#fff;letter-spacing:-0.3px">离开</div>
  <div class="a" style="left:924px;top:16px;width:78px;height:16px;background:#fdfdfd"></div>
  <svg style="left:908px;top:13px" width="21" height="19" viewBox="0 0 21 19"><rect x="2" y="1.5" width="17" height="17" rx="3" fill="#ee5a24" transform="rotate(-12 10.5 10)"/><path d="M14.5 6.5 Q12 5 8.5 5.8 Q5.5 6.8 7 8.8 Q8.5 10 12 10.5 Q15 11.5 13 13.5 Q10 15 6 13" stroke="#fff" stroke-width="2.2" fill="none"/></svg>
  <svg style="left:932px;top:18px" width="9" height="10" viewBox="0 0 9 10"><rect x="0.8" y="2.5" width="7.4" height="4.5" stroke="#2a6fd1" stroke-width="1.4" fill="none"/><path d="M4.5 0 V10" stroke="#2a6fd1" stroke-width="1.5"/></svg>
  <svg style="left:948px;top:20px" width="7" height="7" viewBox="0 0 7 7"><circle cx="1.5" cy="2" r="1.2" fill="#2a6fd1"/><path d="M5 3 Q6 4.5 4.5 6.5" stroke="#2a6fd1" stroke-width="1.3" fill="none"/></svg>
  <svg style="left:961px;top:17px" width="8" height="12" viewBox="0 0 8 12"><rect x="2" y="0" width="4" height="7" rx="2" fill="#2a6fd1"/><path d="M0.7 5 Q0.7 9 4 9 Q7.3 9 7.3 5 M4 9 V11.5 M2 11.5 H6" stroke="#2a6fd1" stroke-width="1" fill="none"/></svg>
  <svg style="left:975px;top:19px" width="10" height="8" viewBox="0 0 10 8"><rect x="0.5" y="0.5" width="9" height="7" rx="1" stroke="#2a6fd1" fill="#e8f0fb"/><path d="M2 2.5 H8 M2 4 H8 M3 5.5 H7" stroke="#2a6fd1" stroke-width="0.8" stroke-dasharray="1 0.6"/></svg>
  <svg style="left:990px;top:18px" width="9" height="9" viewBox="0 0 9 9"><rect x="0" y="0" width="4" height="4" fill="#2a6fd1"/><rect x="5" y="0" width="4" height="4" fill="#2a6fd1"/><rect x="0" y="5" width="4" height="4" fill="#2a6fd1"/><rect x="5" y="5" width="4" height="4" fill="#2a6fd1"/></svg>
</div>
</body></html>
